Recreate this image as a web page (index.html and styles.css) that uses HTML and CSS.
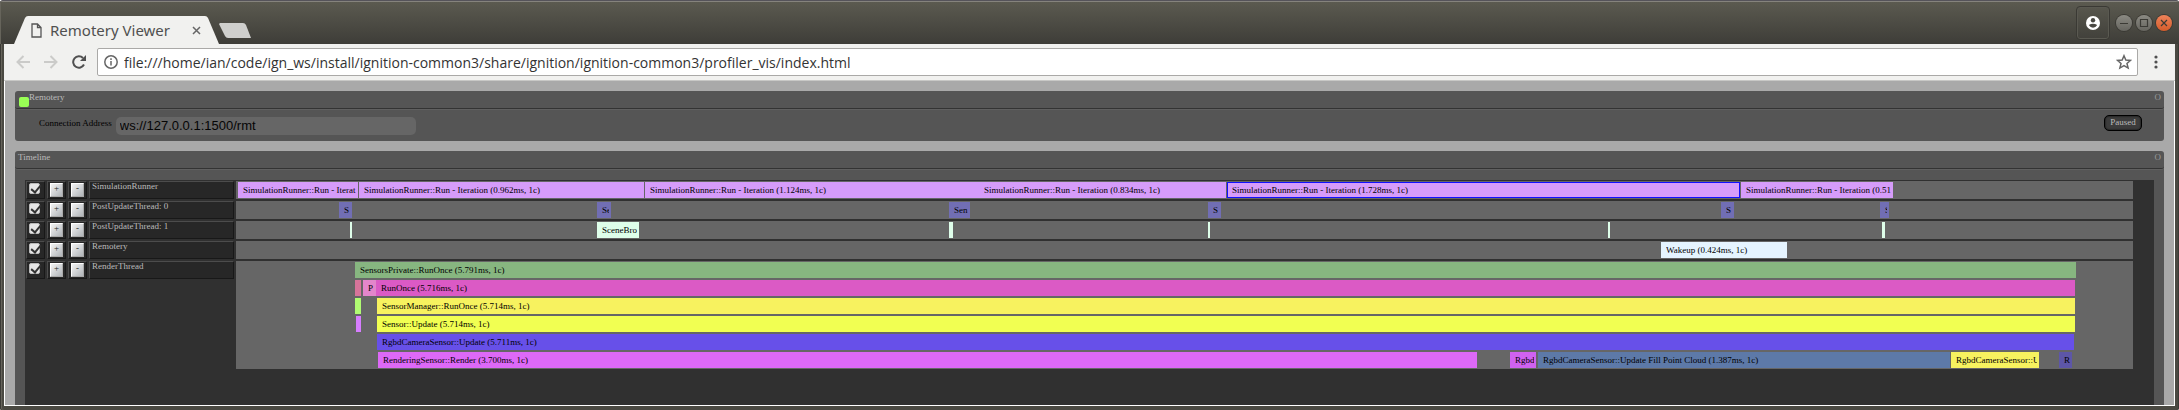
FILE: index.html
```html
<!DOCTYPE html>
<html lang="en">
<head>
<meta charset="utf-8">
<title>Remotery Viewer</title>
<link rel="stylesheet" href="styles.css">
</head>
<body>
<div class="window">
  <header class="titlebar">
    <div class="tab">
      <svg class="tab-edge" viewBox="0 0 14 28"><path d="M0 28 L11 2 Q12 0 14 0 V28Z"/></svg>
      <div class="tab-body">
        <svg class="page-icon" viewBox="0 0 11 15"><path d="M1 1H6.500L10 4.500V14H1ZM6.500 1V4.500H10"/></svg>
        <span class="tab-title">Remotery Viewer</span>
        <button class="tab-close" aria-label="Close tab"><svg viewBox="0 0 9 9"><path d="M1 1L8 8M8 1L1 8"/></svg></button>
      </div>
      <svg class="tab-edge" viewBox="0 0 14 28"><path d="M14 28 L3 2 Q2 0 0 0 V28Z"/></svg>
    </div>
    <button class="new-tab" aria-label="New tab"><svg viewBox="0 0 32 15"><path d="M1 0H24Q26 0 27 2L32 15H9Q7 15 6 13L0 1Z"/></svg></button>
    <div class="window-buttons">
      <button class="profile" aria-label="Profile"><svg viewBox="0 0 14 14"><circle cx="7" cy="7" r="7" fill="#fff"/><circle cx="7" cy="4.300" r="2.200" fill="#494842"/><path d="M2.800 9Q7 6.500 11.200 9Q9.500 11.800 7 11.800T2.800 9Z" fill="#494842"/></svg></button>
      <button class="control" aria-label="Minimize"><svg viewBox="0 0 16 16"><path d="M4 8.500H12"/></svg></button>
      <button class="control" aria-label="Maximize"><svg viewBox="0 0 16 16"><path d="M4.500 4.500H11.500V11.500H4.500Z"/></svg></button>
      <button class="control control-close" aria-label="Close"><svg viewBox="0 0 16 16"><path d="M5 5L11 11M11 5L5 11"/></svg></button>
    </div>
  </header>

  <nav class="toolbar">
    <button class="nav-button" aria-label="Back"><svg viewBox="0 0 14 14"><path d="M14 7H1.500M7.500 1L1.500 7L7.500 13"/></svg></button>
    <button class="nav-button" aria-label="Forward"><svg viewBox="0 0 14 14"><path d="M0 7H12.500M6.500 1L12.500 7L6.500 13"/></svg></button>
    <button class="nav-button reload" aria-label="Reload"><svg viewBox="0 0 14 14"><path d="M12 9.500A5.700 5.700 0 1 1 11 3"/><path class="fill" d="M14 0V6H8Z"/></svg></button>
    <div class="omnibox">
      <svg class="info-icon" viewBox="0 0 14 14"><circle cx="7" cy="7" r="6.200"/><path d="M7 6V10.500M7 3.300V4.900"/></svg>
      <input class="url" type="text" aria-label="Address" value="file:///home/ian/code/ign_ws/install/ignition-common3/share/ignition/ignition-common3/profiler_vis/index.html">
      <button class="star" aria-label="Bookmark"><svg viewBox="0 0 14 14"><path d="M7 1.500L8.600 5.300L12.700 5.600L9.600 8.300L10.600 12.300L7 10.200L3.400 12.300L4.400 8.300L1.300 5.600L5.400 5.300Z"/></svg></button>
    </div>
    <button class="menu" aria-label="Menu"><svg viewBox="0 0 4 14"><circle cx="2" cy="2" r="1.600"/><circle cx="2" cy="7" r="1.600"/><circle cx="2" cy="12" r="1.600"/></svg></button>
  </nav>

  <main class="page">
    <section class="panel">
      <div class="panel-title"><span class="status"></span><span class="panel-name">Remotery</span><span class="panel-toggle">O</span></div>
      <div class="connection">
        <label for="address">Connection Address</label>
        <input id="address" class="address" type="text" value="ws://127.0.0.1:1500/rmt">
        <button class="paused">Paused</button>
      </div>
    </section>

    <section class="panel timeline">
      <div class="panel-title"><span class="panel-name">Timeline</span><span class="panel-toggle">O</span></div>
      <div class="rows">
        <div class="row">
          <div class="cell"><input type="checkbox" class="check" aria-label="Show SimulationRunner" checked></div>
          <div class="cell"><button class="step">+</button></div>
          <div class="cell"><button class="step">-</button></div>
          <div class="cell name">SimulationRunner</div>
          <div class="track">
            <div class="lane">
              <div class="span run" style="--gap:2;--len:120">SimulationRunner::Run - Iterat</div>
              <div class="span run" style="--gap:1;--len:285">SimulationRunner::Run - Iteration (0.962ms, 1c)</div>
              <div class="span run" style="--gap:1;--len:334">SimulationRunner::Run - Iteration (1.124ms, 1c)</div>
              <div class="span run" style="--gap:0;--len:247">SimulationRunner::Run - Iteration (0.834ms, 1c)</div>
              <div class="span run selected" style="--gap:1;--len:513">SimulationRunner::Run - Iteration (1.728ms, 1c)</div>
              <div class="span run" style="--gap:1;--len:152">SimulationRunner::Run - Iteration (0.51</div>
            </div>
          </div>
        </div>
        <div class="row">
          <div class="cell"><input type="checkbox" class="check" aria-label="Show PostUpdateThread: 0" checked></div>
          <div class="cell"><button class="step">+</button></div>
          <div class="cell"><button class="step">-</button></div>
          <div class="cell name">PostUpdateThread: 0</div>
          <div class="track">
            <div class="lane">
              <div class="span sensors" style="--gap:103;--len:13">S</div>
              <div class="span sensors" style="--gap:245;--len:14">Se</div>
              <div class="span sensors" style="--gap:338;--len:21">Sen</div>
              <div class="span sensors" style="--gap:238;--len:13">S</div>
              <div class="span sensors" style="--gap:500;--len:13">S</div>
              <div class="span sensors" style="--gap:146;--len:9">S</div>
            </div>
          </div>
        </div>
        <div class="row">
          <div class="cell"><input type="checkbox" class="check" aria-label="Show PostUpdateThread: 1" checked></div>
          <div class="cell"><button class="step">+</button></div>
          <div class="cell"><button class="step">-</button></div>
          <div class="cell name">PostUpdateThread: 1</div>
          <div class="track">
            <div class="lane">
              <div class="span scene sliver" style="--gap:114;--len:2"></div>
              <div class="span scene" style="--gap:245;--len:42">SceneBro</div>
              <div class="span scene sliver" style="--gap:310;--len:4"></div>
              <div class="span scene sliver" style="--gap:255;--len:2"></div>
              <div class="span scene sliver" style="--gap:398;--len:2"></div>
              <div class="span scene sliver" style="--gap:272;--len:3"></div>
            </div>
          </div>
        </div>
        <div class="row">
          <div class="cell"><input type="checkbox" class="check" aria-label="Show Remotery" checked></div>
          <div class="cell"><button class="step">+</button></div>
          <div class="cell"><button class="step">-</button></div>
          <div class="cell name">Remotery</div>
          <div class="track">
            <div class="lane">
              <div class="span wakeup" style="--gap:1425;--len:126">Wakeup (0.424ms, 1c)</div>
            </div>
          </div>
        </div>
        <div class="row">
          <div class="cell"><input type="checkbox" class="check" aria-label="Show RenderThread" checked></div>
          <div class="cell"><button class="step">+</button></div>
          <div class="cell"><button class="step">-</button></div>
          <div class="cell name">RenderThread</div>
          <div class="track">
            <div class="lane">
              <div class="span private" style="--gap:119;--len:1721">SensorsPrivate::RunOnce (5.791ms, 1c)</div>
            </div>
            <div class="lane">
              <div class="span rose sliver" style="--gap:119;--len:6"></div>
              <div class="span pre" style="--gap:2;--len:13">P</div>
              <div class="span once" style="--gap:0;--len:1699">RunOnce (5.716ms, 1c)</div>
            </div>
            <div class="lane">
              <div class="span lime sliver" style="--gap:119;--len:6"></div>
              <div class="span manager" style="--gap:16;--len:1698">SensorManager::RunOnce (5.714ms, 1c)</div>
            </div>
            <div class="lane">
              <div class="span violet sliver" style="--gap:120;--len:5"></div>
              <div class="span update" style="--gap:16;--len:1698">Sensor::Update (5.714ms, 1c)</div>
            </div>
            <div class="lane">
              <div class="span rgbd" style="--gap:141;--len:1697">RgbdCameraSensor::Update (5.711ms, 1c)</div>
            </div>
            <div class="lane">
              <div class="span render" style="--gap:142;--len:1099">RenderingSensor::Render (3.700ms, 1c)</div>
              <div class="span orchid" style="--gap:33;--len:26">Rgbd</div>
              <div class="span cloud" style="--gap:2;--len:412">RgbdCameraSensor::Update Fill Point Cloud (1.387ms, 1c)</div>
              <div class="span manager" style="--gap:1;--len:88">RgbdCameraSensor::U</div>
              <div class="span indigo" style="--gap:20;--len:13">R</div>
            </div>
          </div>
        </div>
      </div>
    </section>
  </main>
</div>
</body>
</html>
```
FILE: styles.css
```css
* { box-sizing: border-box; }

body {
  margin: 0;
  background: #fff;
}

button, input {
  margin: 0;
  padding: 0;
  border: 0;
  background: none;
  font: inherit;
  color: inherit;
}

svg { display: block; fill: none; }

.window {
  display: flex;
  flex-direction: column;
  height: 100vh;
  padding: 0 4px 4px;
  background: #4a4942;
  border-top: 1px solid #55535a;
  border-radius: 3px 3px 2px 2px;
  box-shadow: inset 1px 0 #3b3a35, inset 2px 0 #66645b, inset -1px 0 #3b3a35;
  overflow: hidden;
}

/* Title bar */
.titlebar {
  display: flex;
  flex: none;
  height: 43px;
  margin: 0 -4px;
  padding: 0 7px 0 14px;
  border-top: 1px solid #85837d;
  border-left: 1px solid #66645b;
  background: linear-gradient(#5b5a50, #3e3d38);
}

.tab {
  display: flex;
  width: 205px;
  margin: 14px 0 0 -1px;
}

.tab-edge {
  width: 14px;
  height: 28px;
  fill: #f1f1ef;
}

.tab-body {
  display: flex;
  flex: 1;
  align-items: center;
  padding-left: 3px;
  background: #f1f1ef;
}

.page-icon {
  width: 11px;
  height: 15px;
  stroke: #555;
  stroke-width: 1.3;
}

.tab-title {
  flex: 1;
  margin-left: 8px;
  color: #505050;
  font: 15px/20px "Noto Sans", "Open Sans", sans-serif;
  white-space: nowrap;
}

.tab-close svg {
  width: 9px;
  height: 9px;
  margin-right: 4px;
  stroke: #666;
  stroke-width: 1.5;
}

.new-tab {
  align-self: flex-start;
  margin-top: 21px;
}

.new-tab svg {
  width: 32px;
  height: 15px;
  fill: #cfcfcd;
}

.window-buttons {
  display: flex;
  gap: 4px;
  align-items: center;
  align-self: flex-start;
  height: 42px;
  margin-left: auto;
}

.profile {
  display: grid;
  place-items: center;
  width: 34px;
  height: 34px;
  margin-right: 2px;
  border: 1px solid #3a3934;
  border-radius: 4px;
  box-shadow: inset 0 0 0 1px #5a5951;
}

.profile svg { width: 14px; height: 14px; }

.control {
  width: 16px;
  height: 16px;
  border-radius: 8px;
  background: linear-gradient(#8b8a83, #66655f);
  box-shadow: 0 0 0 1px #3b3a35;
}

.control svg {
  width: 16px;
  height: 16px;
  stroke: #3b3a35;
  stroke-width: 1.2;
}

.control-close { background: linear-gradient(#ee8259, #d45c2b); }

/* Toolbar */
.toolbar {
  display: flex;
  flex: none;
  align-items: center;
  height: 37px;
  padding: 0 17px 0 12px;
  background: #f1f1ef;
  border-bottom: 1px solid #c8c8c6;
}

.nav-button { margin-right: 14px; }

.nav-button svg {
  width: 14px;
  height: 14px;
  stroke: #cbcbc9;
  stroke-width: 2;
}

.reload { margin-right: 11px; }
.reload svg { stroke: #505050; }
.reload .fill { fill: #505050; stroke: none; }

.omnibox {
  display: flex;
  flex: 1;
  align-items: center;
  height: 28px;
  padding: 0 5px 0 6px;
  background: #fff;
  border: 1px solid #aaa9a7;
  border-radius: 2px;
}

.info-icon {
  width: 14px;
  height: 14px;
  stroke: #666;
  stroke-width: 1.5;
}

.url {
  flex: 1;
  min-width: 0;
  height: 24px;
  margin-left: 6px;
  color: #333;
  font: 14px/20px "Open Sans", "Noto Sans", sans-serif;
}

.star svg {
  width: 16px;
  height: 16px;
  stroke: #666;
  stroke-width: 1.3;
}

.menu { margin-left: 16px; }

.menu svg {
  width: 4px;
  height: 14px;
  fill: #505050;
}

/* Page */
.page {
  display: flex;
  flex: 1;
  flex-direction: column;
  gap: 10px;
  min-height: 0;
  padding: 10px 10px 0;
  background: #a9a9a9;
  border: solid #fff;
  border-width: 0 1px 1px;
  color: #bbb;
  font: 9px/12px "Liberation Serif", serif;
}

.panel {
  flex: none;
  background: #555;
  border-radius: 3px;
}

.panel-title {
  display: flex;
  height: 18px;
  padding: 0 3px;
  border-bottom: 1px solid #333;
  border-radius: 3px;
  box-shadow: 0 1px #606060;
}

.status {
  width: 10px;
  height: 10px;
  margin: 6px 0 0 1px;
  background: #9f5;
  border-radius: 2px;
}

.panel-toggle { margin-left: auto; color: #999; }

.connection {
  display: flex;
  gap: 4px;
  align-items: flex-start;
  padding: 8px 22px 6px 24px;
}

.connection label { color: #000; }

.address {
  width: 300px;
  height: 18px;
  padding: 0 4px;
  background: #666;
  border-radius: 5px;
  color: #050505;
  font: 13px/18px "Liberation Sans", sans-serif;
}

.paused {
  width: 38px;
  height: 16px;
  margin: -2px 0 0 auto;
  padding-bottom: 3px;
  border: 1px solid #000;
  border-radius: 5px;
  background: #3c3c3c;
  box-shadow: inset 0 0 2px #000;
  line-height: 10px;
}

/* Timeline */
.timeline {
  display: flex;
  flex: 1;
  flex-direction: column;
  min-height: 0;
  border-radius: 3px 3px 0 0;
}

.timeline .panel-title { flex: none; }

.rows {
  flex: 1;
  min-height: 0;
  margin: 11px 10px 0;
  padding: 1px 21px 0 1px;
  background: #303030;
  overflow: hidden;
}

.row {
  display: flex;
  gap: 2px;
  align-items: flex-start;
  margin-bottom: 2px;
}

.cell {
  flex: none;
  width: 19px;
  height: 18px;
  padding: 1px 2px;
  background: #272727;
  border: 1px solid;
  border-color: #4c4c4c #181818 #181818 #4c4c4c;
}

.name {
  width: 145px;
  padding: 0 2px;
  line-height: 8px;
  white-space: nowrap;
}

.check {
  display: block;
  width: 11px;
  height: 11px;
  appearance: none;
  background: #e8e8e8;
  border: 1px solid #bbb;
  border-radius: 2px;
}

.check:checked::after {
  content: "";
  display: block;
  width: 4px;
  height: 8px;
  margin: -1px 0 0 3px;
  border: solid #333;
  border-width: 0 2px 2px 0;
  transform: rotate(40deg);
}

.step {
  display: block;
  width: 13px;
  height: 14px;
  padding-bottom: 4px;
  background: linear-gradient(135deg, #f4f4f4, #b0b4b8);
  border: 1px solid;
  border-color: #fff #aaa #aaa #fff;
  color: #222;
  line-height: 8px;
}

.track {
  flex: 1;
  min-width: 0;
  background: #666;
}

.lane {
  display: flex;
  height: 18px;
  padding: 1px 0;
}

/* --gap and --len are timeline ticks; the visible range is 1897 ticks */
.span {
  flex: none;
  width: calc(var(--len) / 1897 * 100%);
  margin-left: calc(var(--gap) / 1897 * 100%);
  padding: 0 2px 0 5px;
  overflow: clip;
  overflow-clip-margin: content-box;
  color: #000;
  line-height: 16px;
  white-space: nowrap;
}

.sliver { padding: 0; }
.run { background: #d69cfa; }
.selected { padding-left: 4px; border: 1px solid #11f; line-height: 14px; }
.sensors { background: #716eb4; }
.scene { background: #defeea; }
.wakeup { background: #e5f4ff; }
.private { background: #87b680; }
.rose { background: #d6749a; }
.pre { background: #e386cb; }
.once { background: #db5ac5; }
.lime { background: #b0fb72; }
.violet { background: #d77dff; }
.manager { background: #f7f25f; }
.update { background: #f1ff52; }
.rgbd { background: #6750e9; }
.render { background: #dd69f7; }
.orchid { background: #d062f0; }
.cloud { background: #5d79a8; }
.indigo { background: #5d56a8; }
```
